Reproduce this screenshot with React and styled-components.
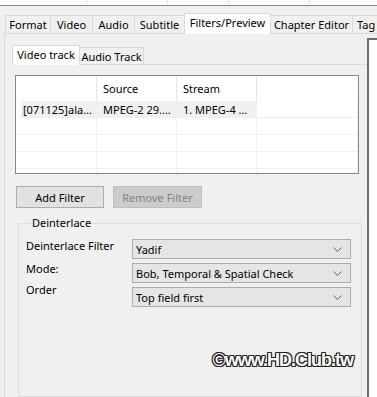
import styled, { createGlobalStyle } from "styled-components";

const GlobalStyle = createGlobalStyle`
  body {
    margin: 0;
    background: #f0f0f0;
    font-family: "Noto Sans", "Liberation Sans", sans-serif;
    font-size: 11px;
    color: #000;
  }
`;

const Window = styled.div`
  width: 377px;
  height: 397px;
  overflow: hidden;
  position: relative;
  background: #f0f0f0;
`;

const TopList = styled.div`
  display: flex;
  height: 5px;
  background: #fff;
  border-bottom: 1px solid #828790;
`;

const TopCol = styled.div`
  width: ${(p) => p.$w}px;
  flex-shrink: 0;
  border-right: 1px solid #e5e5e5;
`;

const TabBar = styled.div`
  display: flex;
  align-items: flex-end;
  height: 20px;
  margin-top: 7px;
  padding-left: 5px;
  position: relative;
  z-index: 1;
`;

const Tab = styled.div`
  flex-shrink: 0;
  box-sizing: border-box;
  width: ${(p) => p.$w}px;
  height: ${(p) => (p.$active ? 21 : 18)}px;
  margin-bottom: ${(p) => (p.$active ? -1 : 0)}px;
  margin-left: -1px;
  border: 1px solid #d9d9d9;
  border-bottom: none;
  background: ${(p) => (p.$active ? "#fff" : "#f0f0f0")};
  display: flex;
  align-items: center;
  justify-content: ${(p) => (p.$start ? "flex-start" : "center")};
  padding-left: ${(p) => (p.$start ? 4 : 0)}px;
  white-space: nowrap;
  line-height: 16px;
  padding-bottom: ${(p) => (p.$active ? 2 : 0)}px;
  &:first-child {
    margin-left: 0;
  }
`;

const Pane = styled.div`
  display: flex;
  align-items: flex-start;
  margin-left: 4px;
  border-top: 1px solid #d9d9d9;
  border-left: 1px solid #d9d9d9;
`;

const LeftCol = styled.div`
  width: 362px;
  flex-shrink: 0;
  box-sizing: border-box;
  padding: 11px 0 0 7px;
`;

const Preview = styled.div`
  flex: 1;
  height: 400px;
  margin-top: 4px;
  border-left: 2px solid #6d6d6d;
  border-top: 2px solid #6d6d6d;
  background: #fff;
`;

const InnerTabBar = styled.div`
  display: flex;
  align-items: flex-end;
  height: 19px;
  position: relative;
  z-index: 1;
`;

const InnerTab = styled(Tab)`
  height: ${(p) => (p.$active ? 20 : 17)}px;
  padding-bottom: ${(p) => (p.$active ? 2 : 0)}px;
  padding-top: ${(p) => (p.$active ? 0 : 2)}px;
`;

const InnerPane = styled.div`
  border-top: 1px solid #d9d9d9;
  padding: 10px 0 0 3px;
`;

const ListBox = styled.div`
  width: 344px;
  height: 99px;
  box-sizing: border-box;
  border: 1px solid #828790;
  background: #fff;
  overflow: hidden;
`;

const Row = styled.div`
  display: grid;
  grid-template-columns: 81px 80px 80px 1fr;
  height: ${(p) => (p.$header ? 25 : 17)}px;
`;

const HeadCell = styled.div`
  border-right: ${(p) => (p.$last ? "none" : "1px solid #e5e5e5")};
  padding-left: 6px;
  display: flex;
  align-items: center;
  white-space: nowrap;
`;

const Cell = styled.div`
  box-sizing: border-box;
  margin-left: ${(p) => (p.$indent ? 5 : 0)}px;
  padding-left: ${(p) => (p.$indent ? 2 : 6)}px;
  background: ${(p) => (p.$selected ? "#f0f0f0" : "#fff")};
  border-right: 1px solid #f0f0f0;
  border-bottom: 1px solid #f0f0f0;
  display: flex;
  align-items: center;
  white-space: nowrap;
  overflow: hidden;
`;

const ButtonRow = styled.div`
  display: flex;
  gap: 9px;
  margin: 12px 0 0 1px;
`;

const Button = styled.div`
  box-sizing: border-box;
  width: ${(p) => p.$w}px;
  height: 22px;
  display: flex;
  align-items: center;
  justify-content: center;
  background: ${(p) => (p.$disabled ? "#cccccc" : "#e1e1e1")};
  border: 1px solid ${(p) => (p.$disabled ? "#bfbfbf" : "#adadad")};
  color: ${(p) => (p.$disabled ? "#838383" : "#000")};
`;

const Group = styled.fieldset`
  box-sizing: border-box;
  margin: 7px 0 0 3px;
  width: 344px;
  height: 182px;
  border: 1px solid #dcdcdc;
  padding: 8px 9px 0 7px;
  display: flex;
  flex-direction: column;
  gap: 4px;
`;

const Legend = styled.legend`
  margin-left: 5px;
  padding: 0 1px;
  line-height: 16px;
`;

const FormRow = styled.div`
  display: flex;
  align-items: flex-start;
`;

const Label = styled.div`
  width: 106px;
  flex-shrink: 0;
  line-height: 16px;
  margin-top: ${(p) => p.$offset}px;
  white-space: nowrap;
`;

const Combo = styled.div`
  box-sizing: border-box;
  width: 219px;
  height: 20px;
  border: 1px solid #adadad;
  background: #e5e5e5;
  display: flex;
  align-items: center;
  justify-content: space-between;
  padding: 1px 8px 0 3px;
  white-space: nowrap;
`;

const Watermark = styled.div`
  position: absolute;
  right: 24px;
  top: 350px;
  font-family: "Liberation Sans", sans-serif;
  font-weight: bold;
  font-size: 18px;
  letter-spacing: -1px;
  color: #fff;
  text-shadow: -1px -1px 0 #222, 1px -1px 0 #222, -1px 1px 0 #222,
    1px 1px 0 #222, 0 -1px 0 #222, 0 1px 0 #222, -1px 0 0 #222, 1px 0 0 #222;
`;

const Chevron = () => (
  <svg width="9" height="5" viewBox="0 0 9 5">
    <path d="M0.5 0.5 L4.5 4.5 L8.5 0.5" fill="none" stroke="#606060" strokeWidth="1" />
  </svg>
);

const topTabs = [
  { title: "Format", w: 46 },
  { title: "Video", w: 43 },
  { title: "Audio", w: 43 },
  { title: "Subtitle", w: 51 },
  { title: "Filters/Preview", w: 87, active: true },
  { title: "Chapter Editor", w: 83 },
  { title: "Tag", w: 40, start: true },
];

const fields = [
  { label: "Deinterlace Filter", value: "Yadif", offset: -1 },
  { label: "Mode:", value: "Bob, Temporal & Spatial Check", offset: -2 },
  { label: "Order", value: "Top field first", offset: -5 },
];

const App = () => {
  return (
    <Window>
      <GlobalStyle />
      <TopList>
        <TopCol $w={86} />
        <TopCol $w={80} />
        <TopCol $w={60} />
        <TopCol $w={80} />
      </TopList>
      <TabBar>
        {topTabs.map((t) => (
          <Tab key={t.title} $w={t.w} $active={t.active} $start={t.start}>
            {t.title}
          </Tab>
        ))}
      </TabBar>
      <Pane>
        <LeftCol>
          <InnerTabBar>
            <InnerTab $w={68} $active>
              Video track
            </InnerTab>
            <InnerTab $w={65}>Audio Track</InnerTab>
          </InnerTabBar>
          <InnerPane>
            <ListBox>
              <Row $header>
                <HeadCell />
                <HeadCell>Source</HeadCell>
                <HeadCell>Stream</HeadCell>
                <HeadCell $last />
              </Row>
              <Row>
                <Cell $indent $selected>[071125]ala…</Cell>
                <Cell $selected>MPEG-2 29.…</Cell>
                <Cell $selected>1. MPEG-4 …</Cell>
                <Cell />
              </Row>
              {[0, 1, 2, 3].map((i) => (
                <Row key={i}>
                  <Cell />
                  <Cell />
                  <Cell />
                  <Cell />
                </Row>
              ))}
            </ListBox>
            <ButtonRow>
              <Button $w={88}>Add Filter</Button>
              <Button $w={89} $disabled>
                Remove Filter
              </Button>
            </ButtonRow>
            <Group>
              <Legend>Deinterlace</Legend>
              {fields.map((f) => (
                <FormRow key={f.label}>
                  <Label $offset={f.offset}>{f.label}</Label>
                  <Combo>
                    {f.value}
                    <Chevron />
                  </Combo>
                </FormRow>
              ))}
            </Group>
          </InnerPane>
        </LeftCol>
        <Preview />
      </Pane>
      <Watermark>©www.HD.Club.tw</Watermark>
    </Window>
  );
};

export default App;
